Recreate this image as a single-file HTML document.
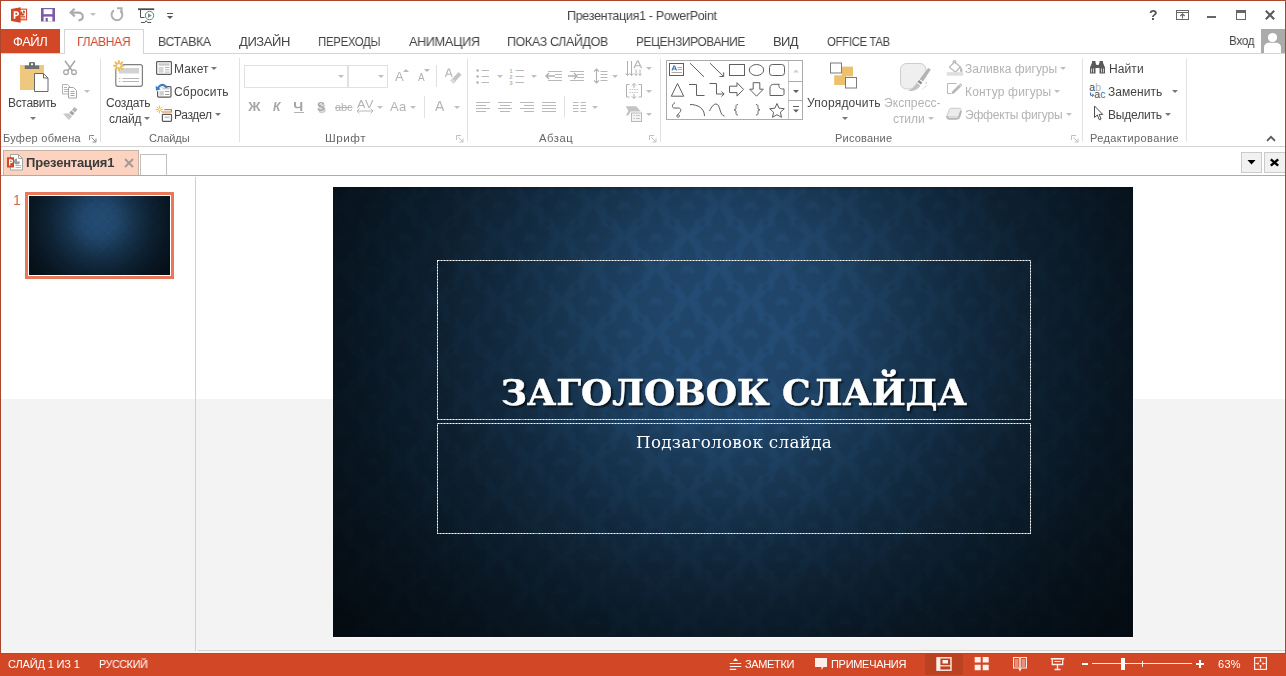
<!DOCTYPE html>
<html lang="ru"><head><meta charset="utf-8"><title>Презентация1 - PowerPoint</title>
<style>
html,body{margin:0;padding:0}
body{width:1286px;height:676px;position:relative;overflow:hidden;background:#fff;font-family:"Liberation Sans",sans-serif}
.a{position:absolute}
.t{position:absolute;white-space:nowrap;line-height:normal;transform-origin:0 50%;will-change:transform}
svg{position:absolute;overflow:visible}
.arr{position:absolute;width:0;height:0;border-left:3px solid transparent;border-right:3px solid transparent;border-top:3px solid #777}
.arr.d{border-top-color:#c0c0c0}
.sep{position:absolute;width:1px;background:#e1e1e1}

</style></head>
<body>
<!-- window chrome -->
<div class="a" style="left:0;top:399px;width:1286px;height:253px;background:#f3f3f3"></div>
<div class="a" style="left:0;top:0;width:1286px;height:1px;background:#aa462c"></div>
<div class="a" style="left:0;top:0;width:1px;height:676px;background:#aa462c"></div>
<div class="a" style="left:1285px;top:0;width:1px;height:676px;background:#aa462c"></div>
<!-- tabs row -->
<div class="a" style="left:1px;top:29px;width:59px;height:24px;background:#d24726"></div>
<div class="a" style="left:1px;top:53px;width:1284px;height:1px;background:#d4d4d4"></div>
<div class="a" style="left:64px;top:29px;width:78px;height:24px;background:#fff;border:1px solid #d4d4d4;border-bottom:none"></div>
<!-- ribbon bottom line -->
<div class="a" style="left:1px;top:146px;width:1284px;height:1px;background:#d4d4d4"></div>
<!-- group separators -->
<div class="sep" style="left:100px;top:58px;height:84px"></div>
<div class="sep" style="left:239px;top:58px;height:84px"></div>
<div class="sep" style="left:467px;top:58px;height:84px"></div>
<div class="sep" style="left:660px;top:58px;height:84px"></div>
<div class="sep" style="left:1082px;top:58px;height:84px"></div>
<div class="sep" style="left:1186px;top:58px;height:84px"></div>
<div class="sep" style="left:436px;top:65px;height:22px"></div>
<div class="sep" style="left:424px;top:96px;height:22px"></div>
<div class="sep" style="left:564px;top:96px;height:22px"></div>
<!-- font boxes -->
<div class="a" style="left:244px;top:65px;width:102px;height:21px;border:1px solid #e1e1e1;background:#fff"></div>
<div class="a" style="left:348px;top:65px;width:38px;height:21px;border:1px solid #e1e1e1;background:#fff"></div>
<!-- shapes gallery -->
<div class="a" style="left:666px;top:60px;width:135px;height:58px;border:1px solid #ababab;background:#fff"></div>
<div class="a" style="left:788px;top:61px;width:1px;height:58px;background:#c6c6c6"></div>
<div class="a" style="left:788px;top:81px;width:14px;height:1px;background:#ababab"></div>
<div class="a" style="left:788px;top:100px;width:14px;height:1px;background:#ababab"></div>
<!-- doc tab bar -->
<div class="a" style="left:3px;top:150px;width:134px;height:25px;background:#fbd3c0;border:1px solid #c9b1a6;border-bottom:none"></div>
<div class="a" style="left:140px;top:154px;width:25px;height:21px;background:#fff;border:1px solid #c0c0c0;border-bottom:none"></div>
<div class="a" style="left:1241px;top:152px;width:19px;height:19px;background:#f1f1f1;border:1px solid #cbcbcb"></div>
<div class="a" style="left:1264px;top:152px;width:20px;height:19px;background:#f1f1f1;border:1px solid #cbcbcb;border-right:none"></div>
<div class="a" style="left:1px;top:175px;width:1284px;height:1px;background:#ababab"></div>
<!-- pane divider -->
<div class="a" style="left:195px;top:177px;width:1px;height:474px;background:#d0d0d0"></div>
<div class="a" style="left:198px;top:650px;width:1087px;height:1px;background:#d4d4d4"></div>
<!-- thumbnail -->
<div class="a" style="left:25px;top:192px;width:149px;height:87px;background:#e8785a"></div>
<div class="a" style="left:28px;top:195px;width:143px;height:81px;background:#fff"></div>
<svg style="left:29px;top:196px" width="141" height="79" viewBox="0 0 800 450" preserveAspectRatio="none"><rect width="800" height="450" fill="url(#sg)"/><rect width="800" height="450" fill="url(#dm)" opacity=".6"/></svg>
<!-- slide -->
<div class="a" style="left:333px;top:187px;width:801px;height:451px;background:#fafafa"></div>
<svg id="slide" style="left:333px;top:187px" width="800" height="450" viewBox="0 0 800 450">
<defs>
<radialGradient id="sg" gradientUnits="userSpaceOnUse" cx="400" cy="138" r="520">
<stop offset="0.000" stop-color="#244d75"/><stop offset="0.115" stop-color="#234b73"/><stop offset="0.192" stop-color="#21486d"/><stop offset="0.269" stop-color="#1d4061"/><stop offset="0.385" stop-color="#16334d"/><stop offset="0.481" stop-color="#122a40"/><stop offset="0.577" stop-color="#0e2233"/><stop offset="0.750" stop-color="#091723"/><stop offset="0.923" stop-color="#060f17"/><stop offset="1.000" stop-color="#050d14"/>
</radialGradient>
<linearGradient id="vb" x1="0" y1="0" x2="0" y2="1"><stop offset="0" stop-color="#000" stop-opacity="0"/><stop offset="1" stop-color="#000" stop-opacity=".15"/></linearGradient>
<linearGradient id="vt" x1="0" y1="0" x2="0" y2="1"><stop offset="0" stop-color="#000" stop-opacity=".22"/><stop offset="1" stop-color="#000" stop-opacity="0"/></linearGradient>
<filter id="bl" x="0" y="0" width="1" height="1"><feGaussianBlur stdDeviation=".9"/></filter>
<g id="mo"><ellipse cx="0" cy="-14" rx="8" ry="11"/><ellipse cx="0" cy="14" rx="8" ry="11"/><ellipse cx="-12" cy="-3" rx="9" ry="7" transform="rotate(-35 -12 -3)"/><ellipse cx="12" cy="-3" rx="9" ry="7" transform="rotate(35 12 -3)"/><ellipse cx="-11" cy="8" rx="8" ry="6" transform="rotate(35 -11 8)"/><ellipse cx="11" cy="8" rx="8" ry="6" transform="rotate(-35 11 8)"/><path d="M0-30l3 6h-6zM0 30l3-6h-6zM-24 0l5-3v6zM24 0l-5-3v6z"/><circle cx="-17" cy="-13" r="2.500"/><circle cx="17" cy="-13" r="2.500"/><circle cx="-16" cy="17" r="2.500"/><circle cx="16" cy="17" r="2.500"/></g>
<pattern id="dm" width="63" height="64" patternUnits="userSpaceOnUse" x="8" y="-14"><g fill="#000" opacity=".085"><use href="#mo" x="31.5" y="32"/><use href="#mo" x="0" y="0"/><use href="#mo" x="63" y="0"/><use href="#mo" x="0" y="64"/><use href="#mo" x="63" y="64"/></g></pattern>
</defs>
<rect width="800" height="450" fill="url(#sg)"/><rect width="800" height="450" fill="url(#dm)" filter="url(#bl)"/><rect width="800" height="4" fill="url(#vt)"/><rect y="310" width="800" height="140" fill="url(#vb)"/>
<g fill="none" shape-rendering="crispEdges"><rect x="104.5" y="73.5" width="593" height="159" stroke="#a0a6ac"/><rect x="104.5" y="236.5" width="593" height="110" stroke="#a0a6ac"/><rect x="104.5" y="73.5" width="593" height="159" stroke="#fff" stroke-dasharray="1 2"/><rect x="104.5" y="236.5" width="593" height="110" stroke="#fff" stroke-dasharray="1 2"/></g>

</svg>
<!-- status bar -->
<div class="a" style="left:1px;top:651px;width:1284px;height:2px;background:#fdf4ef"></div>
<div class="a" style="left:0;top:653px;width:1286px;height:23px;background:#d24726;border-top:1px solid #b8492d;box-sizing:border-box"></div>
<div class="a" style="left:925px;top:654px;width:38px;height:21px;background:#bb4220"></div>
<!-- QAT icons -->
<svg style="left:10px;top:6px" width="18" height="18" viewBox="0 0 18 18">
<rect x="9" y="3.2" width="7.6" height="10.6" fill="#fff" stroke="#d24726" stroke-width="1.1"/>
<path d="M12.3 5.2a2.3 2.3 0 1 0 2.3 2.3h-2.3z" fill="#d24726"/><path d="M13 4.4v2.3h2.3a2.3 2.3 0 0 0-2.3-2.3z" fill="#d24726"/>
<path d="M10.6 10.4h4.6M10.6 12h4.6" stroke="#d24726" stroke-width=".9"/>
<path d="M1 3l9.7-1.8v15.6L1 15z" fill="#d24726"/>
<path d="M3.7 12.8V5.3h2.6c1.7 0 2.7.9 2.7 2.4S7.9 10.2 6.2 10.2H5.4v2.6zM5.4 6.7v2.1h.7c.8 0 1.2-.4 1.2-1.1S6.9 6.7 6.1 6.7z" fill="#fff"/>
</svg>
<svg style="left:41px;top:8px" width="14" height="14" viewBox="0 0 14 14">
<path d="M0 0h14v13.5H0z" fill="#7b5aa6"/><rect x="2.6" y="1.2" width="8.8" height="5" fill="#fff"/><rect x="2.6" y="8.6" width="8.8" height="4.9" fill="#fff"/><rect x="4.6" y="10" width="2.2" height="3.5" fill="#7b5aa6"/>
</svg>
<svg style="left:69px;top:7px" width="16" height="15" viewBox="0 0 16 15">
<path d="M5.6 1.8L1.6 5.6l4.2 3.8" fill="none" stroke="#ababab" stroke-width="2.1"/><path d="M2 5.6h7.2c2.8 0 4.6 1.6 4.6 3.9s-1.7 3.7-4.3 3.9" fill="none" stroke="#ababab" stroke-width="2.1"/>
</svg>
<div class="arr d" style="left:90px;top:13px"></div>
<svg style="left:109px;top:7px" width="16" height="15" viewBox="0 0 16 15">
<path d="M5 3.3A5.4 5.4 0 1 0 11.3 3.6" fill="none" stroke="#b0b0b0" stroke-width="2"/><path d="M8 1.3h4.6v4.9" fill="none" stroke="#b0b0b0" stroke-width="2"/>
</svg>
<svg style="left:137px;top:7px" width="19" height="17" viewBox="0 0 19 17">
<path d="M1 2.2h16.2" stroke="#505050" stroke-width="1.8"/><path d="M3.5 3v7.5h4" fill="none" stroke="#505050" stroke-width="1"/><path d="M4.2 15.5h3.6l1.4-1.8 1.4 1.8h3.6" fill="none" stroke="#505050" stroke-width="1"/>
<circle cx="12.5" cy="8.6" r="4.2" fill="#fff" stroke="#6a6a6a" stroke-width=".9"/><path d="M11 6.2l3.8 2.4L11 11z" fill="#5f9f7d"/>
</svg>
<div class="a" style="left:167px;top:13px;width:6px;height:1px;background:#555"></div>
<div class="arr" style="left:167px;top:16px;border-top-color:#555"></div>
<!-- window controls -->
<span class="t" style="left:1149px;top:7px;font-size:14px;font-weight:bold;color:#555">?</span>
<svg style="left:1176px;top:10px" width="13" height="10" viewBox="0 0 13 10"><rect x=".5" y=".5" width="12" height="9" fill="#fff" stroke="#666"/><path d="M.5 2.5h12" stroke="#666"/><path d="M6.5 8.5V4M4.3 6l2.2-2.2L8.7 6" fill="none" stroke="#666" stroke-width="1.1"/></svg>
<div class="a" style="left:1207px;top:16px;width:9px;height:2px;background:#666"></div>
<div class="a" style="left:1236px;top:10px;width:8px;height:6px;border:1px solid #666;border-top-width:3px"></div>
<svg style="left:1265px;top:10px" width="10" height="10" viewBox="0 0 10 10"><path d="M.8.8l8.4 8.4M9.2.8L.8 9.2" stroke="#5a5a5a" stroke-width="2"/></svg>
<!-- avatar -->
<div class="a" style="left:1261px;top:29px;width:24px;height:24px;background:#ababab;overflow:hidden"><svg style="left:0;top:0" width="24" height="24" viewBox="0 0 24 24"><circle cx="11.5" cy="8.5" r="4.6" fill="#fff"/><path d="M3 24v-5.5c0-3 2.5-4.8 5-4.8h7c2.5 0 5 1.800 5 4.800V24z" fill="#fff"/></svg></div>
<!-- clipboard group -->
<svg style="left:19px;top:61px" width="31" height="32" viewBox="0 0 31 32">
<rect x="1" y="4" width="24" height="25" fill="#edc87e"/>
<path d="M5.800 8v-3.500h4.200v-2.300a1.200 1.200 0 0 1 1.200-1.200h3.600a1.200 1.200 0 0 1 1.200 1.200v2.300H20.200v3.500z" fill="#6e6e6e"/><rect x="12" y="2.300" width="2" height="1.800" fill="#fff"/>
<path d="M15.500 12.500h9l4.500 4.500v13.500h-13.500z" fill="#fff" stroke="#6a6a6a" stroke-width="1"/><path d="M24.500 12.500v4.500h4.500" fill="none" stroke="#6a6a6a" stroke-width="1"/>
</svg>
<div class="arr" style="left:30px;top:117px"></div>
<svg style="left:62px;top:60px" width="16" height="16" viewBox="0 0 16 16">
<path d="M3 .8l7.200 10M13 .8l-7.200 10" stroke="#a6a6a6" stroke-width="1.500" fill="none"/><circle cx="4" cy="12.200" r="2.300" fill="#fff" stroke="#a6a6a6" stroke-width="1.300"/><circle cx="12" cy="12.200" r="2.300" fill="#fff" stroke="#a6a6a6" stroke-width="1.300"/>
</svg>
<svg style="left:61px;top:84px" width="17" height="15" viewBox="0 0 17 15">
<path d="M1.500.5h5l2.500 2.500v7h-7.500z" fill="#fff" stroke="#b3b3b3"/><path d="M3 3.500h3M3 5.500h4M3 7.500h4" stroke="#b3b3b3"/>
<path d="M7.500 3.500h5l3 3v7.500h-8z" fill="#fff" stroke="#a6a6a6"/><path d="M9.500 7.500h4M9.500 9.500h4M9.500 11.500h4" stroke="#a6a6a6"/>
</svg>
<div class="arr d" style="left:84px;top:90px"></div>
<svg style="left:62px;top:106px" width="17" height="15" viewBox="0 0 17 15">
<path d="M12.500 1l3 2.600-2.600 3-3-2.600z" fill="#b5b5b5"/><path d="M9.300 4.500l3.200 2.800-2 2.300-3.200-2.800z" fill="#a3a3a3"/><path d="M6.800 7.300l3.300 2.900L7 14 1 7.800z" fill="#c9c9c9"/>
</svg>
<!-- slides group -->
<svg style="left:112px;top:59px" width="32" height="29" viewBox="0 0 32 29">
<rect x="3.800" y="5.700" width="26.600" height="21.600" rx="2" fill="#fff" stroke="#808080" stroke-width="1.200"/>
<rect x="7" y="9" width="20" height="5.500" fill="#d3d3d3"/>
<path d="M10.500 19.500h16.500M10.500 22.500h16.500" stroke="#b5b5b5"/><path d="M7 19.500h1.500M7 22.500h1.500" stroke="#b5b5b5"/>
<circle cx="6.800" cy="6.800" r="4" fill="#fff"/>
<path d="M6.800 1.300v11M1.300 6.800h11M2.900 2.900l7.800 7.800M10.700 2.900l-7.800 7.800" stroke="#eabb5c" stroke-width="2"/><circle cx="6.800" cy="6.800" r="1.800" fill="#fff"/>
</svg>
<div class="arr" style="left:144px;top:117px"></div>
<svg style="left:156px;top:61px" width="16" height="14" viewBox="0 0 16 14">
<rect x=".6" y=".6" width="14.800" height="12.800" rx=".8" fill="#fff" stroke="#5f5f5f" stroke-width="1.200"/><rect x="2.500" y="2.300" width="11" height="2.400" fill="#c9c9c9"/><rect x="2.500" y="6" width="5" height="5.700" fill="#d6d6d6"/><path d="M9 6.500h4.500M9 8.800h4.500M9 11.100h4.500" stroke="#b5b5b5"/>
</svg>
<div class="arr" style="left:211px;top:67px"></div>
<svg style="left:155px;top:83px" width="17" height="16" viewBox="0 0 17 16">
<rect x="2.600" y="3.700" width="13.400" height="10.400" rx="1" fill="#fff" stroke="#5a5a5a" stroke-width="1.200"/><rect x="4.500" y="8" width="4.300" height="4.500" fill="#cfcfcf"/><path d="M10 8.500h4.300M10 11.500h4.300" stroke="#a0a0a0" stroke-width="1.100"/><rect x="7.500" y="5" width="7" height="1.500" fill="#cfcfcf"/>
<path d="M0 1h9v3.200H5.500v4H0z" fill="#fff"/>
<path d="M2.600 6.500C3.200 3 6.500 1 9.300 2.300c1.200.6 2 1.500 2.400 2.700" fill="none" stroke="#3b7bbf" stroke-width="2"/><path d="M.6 2.800l.5 5 4.700-1.600z" fill="#3b7bbf"/>
</svg>
<svg style="left:156px;top:105px" width="17" height="17" viewBox="0 0 17 17">
<path d="M3.500.6v7.600M-.3 4.400h7.600M.8 1.700l5.400 5.400M6.200 1.700L.8 7.100" stroke="#eabb5c" stroke-width="1"/><circle cx="3.500" cy="4.400" r="1.100" fill="#fff"/>
<path d="M8.300 4.600h7.200v2.400H5.800" fill="none" stroke="#d28440" stroke-width="1.100"/>
<rect x="6.400" y="9.300" width="9.100" height="7" rx=".8" fill="#fff" stroke="#5a5a5a" stroke-width="1.200"/><rect x="8.500" y="11.500" width="5" height="1.600" fill="#c4c4c4"/>
</svg>
<div class="arr" style="left:215px;top:113px"></div>
<!-- font group -->
<div class="arr d" style="left:338px;top:75px"></div>
<div class="arr d" style="left:378px;top:75px"></div>
<svg style="left:403px;top:69px" width="6" height="3" viewBox="0 0 6 3"><path d="M0 3l3-3 3 3z" fill="#b9b9b9"/></svg>
<svg style="left:424px;top:69px" width="6" height="3" viewBox="0 0 6 3"><path d="M0 0l3 3 3-3z" fill="#b9b9b9"/></svg>
<svg style="left:444px;top:66px" width="18" height="19" viewBox="0 0 18 19">
<path d="M8.500 12.500l6-6.500 3 2.800-6 6.500z" fill="#c4c4c4"/><path d="M6.500 14.500l2-2 3 2.800-2 2z" fill="#dcdcdc" stroke="#c4c4c4" stroke-width=".6"/>
<path d="M1.500 11l2.800-8h1l2.800 8M2.600 8.200h4.600" fill="none" stroke="#b3b3b3" stroke-width="1.100"/>
</svg>
<div class="a" style="left:294px;top:112px;width:10px;height:1px;background:#b3b3b3"></div>
<svg style="left:356px;top:108px" width="18" height="6" viewBox="0 0 18 6"><path d="M1 3h16M3.500.5L1 3l2.500 2.500M14.500.5L17 3l-2.500 2.500" fill="none" stroke="#b9b9b9" stroke-width="1"/></svg>
<div class="arr d" style="left:377px;top:106px"></div>
<div class="arr d" style="left:410px;top:106px"></div>
<div class="arr d" style="left:454px;top:106px"></div>
<!-- paragraph group -->
<svg style="left:475px;top:67px" width="16" height="18" viewBox="0 0 16 18">
<circle cx="2.600" cy="3.500" r="1.300" fill="#b3b3b3"/><circle cx="2.600" cy="9.500" r="1.300" fill="#b3b3b3"/><circle cx="2.600" cy="15.500" r="1.300" fill="#b3b3b3"/>
<path d="M6.500 3.500h7.500M6.500 9.500h7.500M6.500 15.500h7.500" stroke="#b9b9b9"/>
</svg>
<div class="arr d" style="left:497px;top:75px"></div>
<svg style="left:508px;top:67px" width="17" height="18" viewBox="0 0 17 18">
<text x="1.500" y="5.800" font-size="5.500" font-family="Liberation Sans,sans-serif" font-weight="bold" fill="#b3b3b3">1</text><text x="1.500" y="11.800" font-size="5.500" font-family="Liberation Sans,sans-serif" font-weight="bold" fill="#b3b3b3">2</text><text x="1.500" y="17.800" font-size="5.500" font-family="Liberation Sans,sans-serif" font-weight="bold" fill="#b3b3b3">3</text>
<path d="M7.500 3.500h8.500M7.500 9.500h8.500M7.500 15.500h8.500" stroke="#b9b9b9"/>
</svg>
<div class="arr d" style="left:531px;top:75px"></div>
<svg style="left:545px;top:69px" width="18" height="14" viewBox="0 0 18 14">
<path d="M3 2.500h14M10 5.500h7M10 8.500h7M3 11.500h14" stroke="#b9b9b9"/><path d="M1 7h9M4 4L1 7l3 3" fill="none" stroke="#b0b0b0" stroke-width="1.300"/>
</svg>
<svg style="left:567px;top:69px" width="18" height="14" viewBox="0 0 18 14">
<path d="M3 2.500h14M10 5.500h7M10 8.500h7M3 11.500h14" stroke="#b9b9b9"/><path d="M1 7h9M7 4l3 3-3 3" fill="none" stroke="#b0b0b0" stroke-width="1.300"/>
</svg>
<svg style="left:593px;top:67px" width="16" height="18" viewBox="0 0 16 18">
<path d="M3.500 2v14M1 4.500L3.500 2 6 4.500M1 13.500L3.500 16 6 13.500" fill="none" stroke="#b0b0b0" stroke-width="1.100"/><path d="M7.500 4.500h7M7.500 7.500h7M7.500 10.500h7M7.500 13.500h7" stroke="#b9b9b9"/>
</svg>
<div class="arr d" style="left:612px;top:75px"></div>
<svg style="left:625px;top:60px" width="18" height="17" viewBox="0 0 18 17">
<path d="M2.500 1v14.500M6.500 1v14.500M.5 13.500l2 2 2-2M4.500 13.500l2 2 2-2" fill="none" stroke="#b0b0b0"/>
<path d="M9 8.300L12.300 1h.9l3.300 7.300M10.200 5.800h5.100" fill="none" stroke="#b0b0b0" stroke-width="1.100"/>
<path d="M11 9.500v6M15 9.500v6M9.500 13.800l1.500 1.700 1.500-1.700M13.500 13.800l1.500 1.700 1.500-1.700" fill="none" stroke="#b0b0b0" stroke-width=".9"/>
</svg>
<div class="arr d" style="left:646px;top:67px"></div>
<svg style="left:625px;top:83px" width="18" height="16" viewBox="0 0 18 16">
<path d="M4.500 1.500h-3v12.500h3M13.500 1.500h3v12.500h-3" fill="none" stroke="#b0b0b0"/><path d="M9 .5v4.500M6.800 2.700L9 .5l2.200 2.200M9 15.500v-4.500M6.800 13.300L9 15.500l2.200-2.200" fill="none" stroke="#b0b0b0"/><path d="M4.500 6.500h9M4.500 9.500h9" stroke="#c6c6c6" stroke-dasharray="1.500 .8"/>
</svg>
<div class="arr d" style="left:646px;top:90px"></div>
<svg style="left:625px;top:105px" width="18" height="18" viewBox="0 0 18 18">
<path d="M.8 1.300h10.500l4.500 5.200h-10l-2.500 4H.8l2.500-4.600z" fill="#c4c4c4"/><rect x="6.500" y="8" width="10" height="8.500" fill="#f4f4f4" stroke="#b9b9b9"/><path d="M8.500 10.500h1.500M11 10.500h4M8.500 13.500h1.500M11 13.500h4" stroke="#c6c6c6"/>
</svg>
<div class="arr d" style="left:646px;top:113px"></div>
<svg style="left:475px;top:101px" width="82" height="12" viewBox="0 0 82 12">
<path d="M1 1.500h14M1 4.500h10M1 7.500h14M1 10.500h10" stroke="#b9b9b9"/>
<path d="M23 1.500h14M25 4.500h10M23 7.500h14M25 10.500h10" stroke="#b9b9b9"/>
<path d="M45 1.500h14M49 4.500h10M45 7.500h14M49 10.500h10" stroke="#b9b9b9"/>
<path d="M67 1.500h14M67 4.500h14M67 7.500h14M67 10.500h14" stroke="#b9b9b9"/>
</svg>
<svg style="left:573px;top:101px" width="14" height="12" viewBox="0 0 14 12"><path d="M0 1.500h5.500M7.500 1.500H13M0 4.500h5.500M7.500 4.500H13M0 7.500h5.500M7.500 7.500H13M0 10.500h5.500M7.500 10.500H13" stroke="#b9b9b9"/></svg>
<div class="arr d" style="left:592px;top:106px"></div>
<!-- shapes gallery -->
<svg style="left:666px;top:60px" width="137" height="60" viewBox="0 0 137 60">
<g fill="none" stroke="#5f5f5f" stroke-width="1">
<rect x="3.500" y="3.500" width="14" height="12"/>
<path d="M24 3.200L38 16.800"/>
<path d="M44 3.200L57.500 16.300M53.500 16.500h4.200v-4.200"/>
<rect x="63.500" y="4.500" width="15" height="11"/>
<ellipse cx="90.500" cy="10" rx="7.200" ry="5.500"/>
<rect x="103.500" y="4.500" width="15" height="11" rx="2.800"/>
<path d="M11.500 23.500L5.300 36.200h12.400z"/>
<path d="M23 24.500h7.500v11h8"/>
<path d="M43.500 23.500h7v10.500h7.500M55.500 31.500l2.700 2.500-2.700 2.500"/>
<path d="M63.500 26.200h7.500v-3.500l6.500 6.700-6.500 6.700v-3.500h-7.500z"/>
<path d="M87.200 22.700h6.600v6.500h3.500l-6.800 7-6.800-7h3.500z"/>
<path d="M104 35.500v-7.500c0-2.200 1.400-3.700 3.600-3.700h5.600c-1 3 .8 5.200 4.800 4.600v4.800c0 1.100-.7 1.800-1.800 1.800z"/>
<path d="M9 42.500c-3 2-3.500 5-1 5.500 3 .6 5-1 6.500 1 1.500 2.500-2.500 4.500-3.500 6.500-.8 1.600 1.500 2.500 2.300 1 .7-1.500-1.300-2.300-2-1.200"/>
<path d="M24 44.500c8 0 14.500 4 14.500 11.500"/>
<path d="M43.500 51c2-4 4-7 6.500-7 4.500 0 3.500 12 8.500 12"/>
<path d="M72 44.500c-2.300 0-2 1.500-2 3 0 1.500-.3 2.300-2 2.300 1.700 0 2 .8 2 2.300 0 1.500-.3 3 2 3"/>
<path d="M90 44.500c2.300 0 2 1.500 2 3 0 1.500.3 2.300 2 2.300-1.700 0-2 .8-2 2.300 0 1.500.3 3-2 3"/>
<path d="M111 43.500l2.100 4.700 5.200.5-3.900 3.500 1.100 5.100-4.500-2.600-4.500 2.600 1.100-5.100-3.900-3.500 5.200-.5z"/>
</g>
<path d="M6 10.500L7.800 6h.9l1.800 4.500M6.700 9h3.100" fill="none" stroke="#3b6fb5" stroke-width="1.100"/>
<path d="M11.500 7.500h4.500M11.500 9.500h4.500" stroke="#b9a89a"/><path d="M5.500 12.500h10.500" stroke="#b9a89a"/>
<path d="M127 12.500l3-3 3 3z" fill="#d0d0d0"/>
<path d="M127 30l3 3 3-3z" fill="#5f5f5f"/>
<path d="M127 46.500h6" stroke="#5f5f5f"/><path d="M127 49.500l3 3 3-3z" fill="#5f5f5f"/>
</svg>
<!-- drawing group -->
<svg style="left:829px;top:62px" width="29" height="28" viewBox="0 0 29 28">
<rect x="13" y="4.600" width="11" height="9.800" fill="#edc06e"/><rect x="5.200" y="13.300" width="11.600" height="9.700" fill="#edc06e"/>
<rect x="1.500" y="1" width="11" height="10" fill="#fff" stroke="#7a7a7a"/><rect x="16.500" y="15.500" width="11" height="10.500" fill="#fff" stroke="#7a7a7a"/>
</svg>
<div class="arr" style="left:842px;top:117px"></div>
<svg style="left:899px;top:62px" width="34" height="32" viewBox="0 0 34 32">
<rect x="1.500" y="1.500" width="25.500" height="25.500" rx="6" fill="#efefef" stroke="#cdcdcd"/>
<path d="M10 32L31 5.500l4 2v24.500z" fill="#fff"/>
<path d="M27 19.500v3a4.500 4.500 0 0 1-3.500 4.300" fill="none" stroke="#cdcdcd" stroke-dasharray="2.500 1.500"/>
<path d="M29.200 6l2.600 1.600-7.800 12-3.400-2.400z" fill="#b3b3b3"/><path d="M20 18l3.400 2.400-1.500 2-3.400-2.500z" fill="#8f8f8f"/>
<path d="M17.800 20.800l3.500 2.600c-1.800 3.600-6 6-12.300 5.600 3.600-1.600 6-4.200 8.800-8.200z" fill="#c2c2c2"/>
</svg>
<div class="arr d" style="left:928px;top:117px"></div>
<svg style="left:946px;top:59px" width="18" height="18" viewBox="0 0 18 18">
<path d="M3.300 8.300L8.400 3l6 4.700-5 5.500z" fill="#fff" stroke="#b3b3b3" stroke-width="1.100"/><path d="M7.200 4.200V1.800h2.600v2.600" fill="none" stroke="#b3b3b3"/><path d="M14.600 7.500c1.300 1.500 2 3 2 4.300a1.300 1.300 0 0 1-2.600 0c0-1.300.3-2.800.6-4.300z" fill="#b9b9b9"/>
<rect x=".8" y="13.200" width="16.400" height="3.500" fill="#dedede"/>
</svg>
<div class="arr d" style="left:1060px;top:67px"></div>
<svg style="left:946px;top:82px" width="18" height="14" viewBox="0 0 18 14">
<path d="M10.500 1.500h-9v10h3.500" fill="none" stroke="#b9b9b9"/><path d="M14.300 1.200l2 2-8 8-3 1 1-3z" fill="#b9b9b9"/><path d="M13.200 2.400l2 2" stroke="#fff" stroke-width=".8"/>
</svg>
<div class="arr d" style="left:1054px;top:90px"></div>
<svg style="left:946px;top:107px" width="17" height="14" viewBox="0 0 17 14">
<path d="M5 1.300h8.500c1.300 0 1.800.9 1.400 2l-2 5.200c-.4 1-1.100 1.400-2.100 1.400H2.300c-.9 0-1.400-.6-1.100-1.500l2-5.700c.4-1 .9-1.400 1.800-1.400z" fill="#ececec" stroke="#c6c6c6" stroke-width=".9"/><path d="M1.100 9c0 1.900.8 2.800 2.400 2.800h7c1.500 0 2.400-.8 2.900-2.200l1.700-5.600" fill="none" stroke="#b5b5b5" stroke-width="1.900"/>
</svg>
<div class="arr d" style="left:1066px;top:113px"></div>
<!-- editing group -->
<svg style="left:1089px;top:60px" width="17" height="14" viewBox="0 0 17 14">
<path d="M1 13.500V7.500L3 2.800V1h3.500v1.800L7.500 5h2l1-2.200V1H14v1.800l2 4.700v6h-5.500V8h-4v5.500z" fill="#5a5a5a"/><path d="M2.500 8.500v4M4.500 8.500v4M12.500 8.500v4M14.500 8.500v4" stroke="#fff" stroke-width=".7"/>
</svg>
<svg style="left:1089px;top:82px" width="18" height="17" viewBox="0 0 18 17">
<text x=".3" y="8.800" font-size="10.500" font-family="Liberation Sans,sans-serif" fill="#4a4a4a">a</text><text x="6.200" y="8.800" font-size="10.500" font-family="Liberation Sans,sans-serif" fill="#b0b0b0">b</text>
<text x="5.300" y="16.200" font-size="10.500" font-family="Liberation Sans,sans-serif" fill="#4a4a4a">a</text><text x="11.300" y="16.200" font-size="10.500" font-family="Liberation Sans,sans-serif" fill="#3b6fb5">c</text>
<path d="M1.500 10.500v2.800h3M3.200 11.800l1.500 1.500-1.500 1.500" fill="none" stroke="#3b6fb5" stroke-width="1"/>
</svg>
<div class="arr" style="left:1172px;top:90px"></div>
<svg style="left:1093px;top:105px" width="11" height="16" viewBox="0 0 11 16">
<path d="M1.500 1v11.500l2.800-2.500 2 4.800 1.800-.8-2-4.600h3.700z" fill="#fff" stroke="#4f4f4f" stroke-width="1"/>
</svg>
<div class="arr" style="left:1165px;top:113px"></div>
<!-- group launchers -->
<svg style="left:89px;top:135px" width="8" height="8" viewBox="0 0 8 8"><path d="M.5 5V.5H5" fill="none" stroke="#8a8a8a"/><path d="M2.500 2.500l4 4M7 3.500V7H3.500" fill="none" stroke="#8a8a8a"/></svg>
<svg style="left:456px;top:135px" width="8" height="8" viewBox="0 0 8 8"><path d="M.5 5V.5H5" fill="none" stroke="#c0c0c0"/><path d="M2.500 2.500l4 4M7 3.500V7H3.500" fill="none" stroke="#c0c0c0"/></svg>
<svg style="left:649px;top:135px" width="8" height="8" viewBox="0 0 8 8"><path d="M.5 5V.5H5" fill="none" stroke="#c0c0c0"/><path d="M2.500 2.500l4 4M7 3.500V7H3.500" fill="none" stroke="#c0c0c0"/></svg>
<svg style="left:1071px;top:135px" width="8" height="8" viewBox="0 0 8 8"><path d="M.5 5V.5H5" fill="none" stroke="#c0c0c0"/><path d="M2.500 2.500l4 4M7 3.500V7H3.500" fill="none" stroke="#c0c0c0"/></svg>
<svg style="left:1266px;top:135px" width="10" height="7" viewBox="0 0 10 7"><path d="M1 5.800L5 1.800l4 4" fill="none" stroke="#5a5a5a" stroke-width="1.800"/></svg>
<!-- doc tab icon -->
<svg style="left:6px;top:154px" width="18" height="17" viewBox="0 0 18 17">
<path d="M4.500.5h8l4 4v11.500h-12z" fill="#fff" stroke="#a5a5a5"/><path d="M12.500.5v4h4" fill="none" stroke="#a5a5a5"/>
<path d="M11 4.500v3h3a3 3 0 1 1-3-3z" fill="#9a9a9a"/>
<path d="M9.500 11.500h5.500M9.500 13.500h5.500" stroke="#e3a48f"/>
<rect x="1" y="3.300" width="7" height="10.200" fill="#d24726"/>
<path d="M3 11.500V5.300h2c1.200 0 2 .7 2 1.900s-.8 1.900-2 1.900H4.300v2.400zM4.300 6.400v1.600h.6c.5 0 .8-.3.800-.8s-.3-.8-.8-.8z" fill="#fff"/>
</svg>
<svg style="left:124px;top:158px" width="10" height="10" viewBox="0 0 10 10"><path d="M1 1l8 8M9 1L1 9" stroke="#a79a94" stroke-width="2"/></svg>
<!-- tab bar buttons -->
<svg style="left:1247px;top:160px" width="9" height="5" viewBox="0 0 9 5"><path d="M.5 0h8L4.500 4.500z" fill="#000"/></svg>
<svg style="left:1269px;top:158px" width="11" height="9" viewBox="0 0 11 9"><path d="M1.800 1.300l7.400 6.400M9.200 1.300l-7.400 6.400" stroke="#000" stroke-width="2.400"/></svg>
<!-- status bar icons -->
<svg style="left:729px;top:657px" width="13" height="13" viewBox="0 0 13 13"><path d="M4 4l2.500-3L9 4z" fill="#fff"/><path d="M.8 6.500h11.400M.8 9.500h11.400M.8 12.300h6.400" stroke="#fff" stroke-width="1.200"/></svg>
<svg style="left:814px;top:657px" width="14" height="14" viewBox="0 0 14 14"><path d="M1 1h12v9H9.500L7.500 13V10H1z" fill="#fdeee9"/></svg>
<svg style="left:936px;top:657px" width="16" height="14" viewBox="0 0 16 14"><rect x="1" y=".8" width="14" height="12.400" fill="none" stroke="#fdeee9" stroke-width="1.400"/><rect x="1" y=".8" width="3.400" height="12.400" fill="#fdeee9"/><path d="M4 8.800h11" stroke="#fdeee9" stroke-width="1.200"/><rect x="6.500" y="3" width="5.500" height="3.500" fill="#fdeee9"/></svg>
<svg style="left:974px;top:657px" width="15" height="14" viewBox="0 0 15 14"><path d="M.7 0h6v5.500h-6zM8.700 0h6v5.500h-6zM.7 7.700h6v5.500h-6zM8.700 7.700h6v5.500h-6z" fill="#fdeee9"/></svg>
<svg style="left:1013px;top:656px" width="14" height="15" viewBox="0 0 14 15">
<path d="M.6 1.500h5.300l1.100 1 1.100-1h5.300v10.500H8.100L7 14.500 5.900 12H.6z" fill="none" stroke="#fdeee9" stroke-width="1.100"/><path d="M7 2.500v10" stroke="#fdeee9" stroke-width="1.400"/><path d="M2 4h3.500M2 6h3.500M2 8h3.500M2 10h3.500M8.500 4H12M8.500 6H12M8.500 8H12M8.500 10H12" stroke="#fdeee9" stroke-width=".9"/></svg>
<svg style="left:1050px;top:657px" width="15" height="14" viewBox="0 0 15 14"><path d="M.8 1.800h13.400" stroke="#fdeee9" stroke-width="1.600"/><path d="M2.300 2.500v5h10.400v-5" fill="none" stroke="#fdeee9" stroke-width="1.300"/><path d="M4.500 4.500h6" stroke="#fdeee9" stroke-width="1"/><path d="M7.500 7.500v5M4.500 12.500h6" stroke="#fdeee9" stroke-width="1.300"/></svg>
<!-- zoom slider -->
<div class="a" style="left:1082px;top:663px;width:6px;height:2px;background:#fff"></div>
<div class="a" style="left:1092px;top:663px;width:100px;height:1px;background:#fdeee9"></div>
<div class="a" style="left:1142px;top:661px;width:1px;height:6px;background:#fdeee9"></div>
<div class="a" style="left:1121px;top:658px;width:4px;height:12px;background:#fff"></div>
<div class="a" style="left:1196px;top:663px;width:8px;height:2px;background:#fff"></div>
<div class="a" style="left:1199px;top:660px;width:2px;height:8px;background:#fff"></div>
<svg style="left:1254px;top:657px" width="13" height="13" viewBox="0 0 13 13"><rect x=".6" y=".6" width="11.800" height="11.800" fill="none" stroke="#fdeee9" stroke-width="1.200"/><path d="M6.500 1.500v3.500M6.500 8v3.500M1.500 6.500H5M8 6.500h3.500" stroke="#fdeee9" stroke-width="1"/><path d="M5.300 3.500l1.200 1.500 1.200-1.500M5.300 9.500l1.200-1.500 1.200 1.500M3.500 5.300L5 6.500 3.500 7.700M9.500 5.300L8 6.500l1.500 1.200" fill="none" stroke="#fdeee9" stroke-width=".8"/></svg>

<!-- text -->
<span class="t" style="left:566.6px;top:8px;font-size:13px;color:#444444;letter-spacing:-0.35px;transform:scaleX(0.965);">Презентация1 - PowerPoint</span>
<span class="t" style="left:12.6px;top:34px;font-size:13px;color:#ffffff;letter-spacing:-0.45px;">ФАЙЛ</span>
<span class="t" style="left:76.9px;top:34px;font-size:13px;color:#d24726;letter-spacing:-0.35px;transform:scaleX(0.932);">ГЛАВНАЯ</span>
<span class="t" style="left:158.2px;top:34px;font-size:13px;color:#444444;letter-spacing:-0.35px;transform:scaleX(0.945);">ВСТАВКА</span>
<span class="t" style="left:239.2px;top:34px;font-size:13px;color:#444444;letter-spacing:-0.40px;">ДИЗАЙН</span>
<span class="t" style="left:318.2px;top:34px;font-size:13px;color:#444444;letter-spacing:-0.35px;transform:scaleX(0.878);">ПЕРЕХОДЫ</span>
<span class="t" style="left:408.5px;top:34px;font-size:13px;color:#444444;letter-spacing:-0.35px;transform:scaleX(0.975);">АНИМАЦИЯ</span>
<span class="t" style="left:507.2px;top:34px;font-size:13px;color:#444444;letter-spacing:-0.35px;transform:scaleX(0.956);">ПОКАЗ СЛАЙДОВ</span>
<span class="t" style="left:636.2px;top:34px;font-size:13px;color:#444444;letter-spacing:-0.35px;transform:scaleX(0.907);">РЕЦЕНЗИРОВАНИЕ</span>
<span class="t" style="left:773.2px;top:34px;font-size:13px;color:#444444;letter-spacing:-0.61px;">ВИД</span>
<span class="t" style="left:826.6px;top:34px;font-size:13px;color:#444444;letter-spacing:-0.35px;transform:scaleX(0.875);">OFFICE TAB</span>
<span class="t" style="left:1229.2px;top:33px;font-size:13px;color:#444444;letter-spacing:-0.35px;transform:scaleX(0.902);">Вход</span>
<span class="t" style="left:7.6px;top:96px;font-size:12px;color:#444444;letter-spacing:-0.32px;">Вставить</span>
<span class="t" style="left:3.2px;top:132px;font-size:11px;color:#666666;letter-spacing:0.26px;">Буфер обмена</span>
<span class="t" style="left:106.2px;top:96px;font-size:12px;color:#444444;letter-spacing:-0.17px;">Создать</span>
<span class="t" style="left:109.2px;top:112px;font-size:12px;color:#444444;letter-spacing:-0.20px;">слайд</span>
<span class="t" style="left:174.2px;top:62px;font-size:12px;color:#444444;letter-spacing:0.16px;">Макет</span>
<span class="t" style="left:174.2px;top:85px;font-size:12px;color:#444444;letter-spacing:0.18px;">Сбросить</span>
<span class="t" style="left:174.2px;top:108px;font-size:12px;color:#444444;letter-spacing:-0.35px;transform:scaleX(0.992);">Раздел</span>
<span class="t" style="left:149.2px;top:132px;font-size:11px;color:#666666;letter-spacing:-0.07px;">Слайды</span>
<span class="t" style="left:325.2px;top:132px;font-size:11px;color:#666666;letter-spacing:0.50px;transform:scaleX(1.063);">Шрифт</span>
<span class="t" style="left:539.2px;top:132px;font-size:11px;color:#666666;letter-spacing:0.50px;transform:scaleX(1.023);">Абзац</span>
<span class="t" style="left:807.2px;top:96px;font-size:12px;color:#444444;letter-spacing:0.22px;">Упорядочить</span>
<span class="t" style="left:834.8px;top:132px;font-size:11px;color:#666666;letter-spacing:0.20px;">Рисование</span>
<span class="t" style="left:884.2px;top:96px;font-size:12px;color:#b3b3b3;letter-spacing:0.09px;">Экспресс-</span>
<span class="t" style="left:893.2px;top:112px;font-size:12px;color:#b3b3b3;letter-spacing:-0.08px;">стили</span>
<span class="t" style="left:965.2px;top:62px;font-size:12px;color:#b3b3b3;letter-spacing:0.04px;">Заливка фигуры</span>
<span class="t" style="left:965.2px;top:85px;font-size:12px;color:#b3b3b3;letter-spacing:0.19px;">Контур фигуры</span>
<span class="t" style="left:965.2px;top:108px;font-size:12px;color:#b3b3b3;letter-spacing:-0.19px;">Эффекты фигуры</span>
<span class="t" style="left:1108.6px;top:62px;font-size:12px;color:#444444;letter-spacing:0.11px;">Найти</span>
<span class="t" style="left:1108.2px;top:85px;font-size:12px;color:#444444;letter-spacing:0.05px;">Заменить</span>
<span class="t" style="left:1108.2px;top:108px;font-size:12px;color:#444444;letter-spacing:-0.18px;">Выделить</span>
<span class="t" style="left:1089.6px;top:132px;font-size:11px;color:#666666;letter-spacing:0.38px;">Редактирование</span>
<span class="t" style="left:248.7px;top:100px;font-size:12px;color:#a6a6a6;font-weight:bold;transform-origin:50% 50%;transform:scaleX(1.13);">Ж</span>
<span class="t" style="left:272.5px;top:100px;font-size:12px;color:#a6a6a6;font-weight:bold;font-style:italic;">К</span>
<span class="t" style="left:293.9px;top:100px;font-size:12px;color:#a6a6a6;font-weight:bold;transform-origin:50% 50%;transform:scaleX(1.18);">Ч</span>
<span class="t" style="left:317.1px;top:100px;font-size:12px;color:#a6a6a6;font-weight:bold;text-shadow:1px 1.5px 1px #c4c4c4;">S</span>
<span class="t" style="left:334.6px;top:101px;font-size:11px;color:#b3b3b3;letter-spacing:-0.12px;text-decoration:line-through;">abc</span>
<span class="t" style="left:357.0px;top:99px;font-size:10px;color:#b3b3b3;letter-spacing:0.50px;transform:scaleX(1.259);">AV</span>
<span class="t" style="left:389.6px;top:99px;font-size:13px;color:#b3b3b3;letter-spacing:0.29px;">Aa</span>
<span class="t" style="left:435.2px;top:98px;font-size:14px;color:#b3b3b3;">A</span>
<span class="t" style="left:394.5px;top:69px;font-size:13px;color:#b3b3b3;">A</span>
<span class="t" style="left:417.7px;top:72px;font-size:10px;color:#b3b3b3;">A</span>
<span class="t" style="left:26.4px;top:155px;font-size:13px;color:#3b3b3b;letter-spacing:-0.17px;font-weight:bold;">Презентация1</span>
<span class="t" style="left:13.1px;top:192px;font-size:14px;color:#d2694c;">1</span>
<span class="t" style="left:7.7px;top:658px;font-size:11px;color:#ffffff;letter-spacing:-0.14px;">СЛАЙД 1 ИЗ 1</span>
<span class="t" style="left:98.7px;top:658px;font-size:11px;color:#ffffff;letter-spacing:-0.35px;transform:scaleX(0.970);">РУССКИЙ</span>
<span class="t" style="left:745.2px;top:658px;font-size:11px;color:#ffffff;letter-spacing:-0.35px;transform:scaleX(0.990);">ЗАМЕТКИ</span>
<span class="t" style="left:830.8px;top:658px;font-size:11px;color:#ffffff;letter-spacing:-0.30px;">ПРИМЕЧАНИЯ</span>
<span class="t" style="left:1218.2px;top:658px;font-size:11px;color:#ffffff;letter-spacing:0.28px;">63%</span>
<span class="t" style="left:500.9px;top:371px;font-size:36px;color:#ffffff;letter-spacing:-0.07px;font-family:'DejaVu Serif',serif;font-weight:bold;-webkit-text-stroke:.5px #fff;text-shadow:2px 2px 2px rgba(0,0,0,.7);">ЗАГОЛОВОК СЛАЙДА</span>
<span class="t" style="left:636.0px;top:432px;font-size:16.7px;color:#ffffff;letter-spacing:0.33px;font-family:'DejaVu Serif',serif;">Подзаголовок слайда</span>
</body></html>
